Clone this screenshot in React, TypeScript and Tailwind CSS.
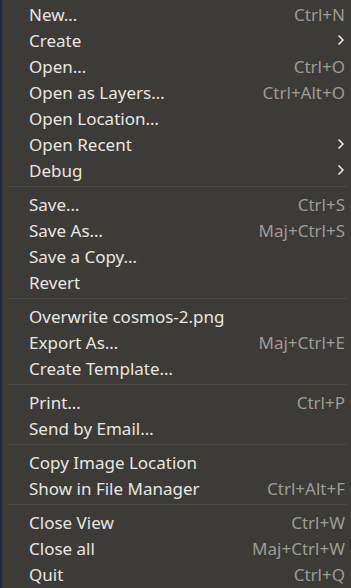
import React from "react";

type Item = { label: string; shortcut?: string; sub?: boolean };

const groups: Item[][] = [
  [
    { label: "New…", shortcut: "Ctrl+N" },
    { label: "Create", sub: true },
    { label: "Open…", shortcut: "Ctrl+O" },
    { label: "Open as Layers…", shortcut: "Ctrl+Alt+O" },
    { label: "Open Location…" },
    { label: "Open Recent", sub: true },
    { label: "Debug", sub: true },
  ],
  [
    { label: "Save…", shortcut: "Ctrl+S" },
    { label: "Save As…", shortcut: "Maj+Ctrl+S" },
    { label: "Save a Copy…" },
    { label: "Revert" },
  ],
  [
    { label: "Overwrite cosmos-2.png" },
    { label: "Export As…", shortcut: "Maj+Ctrl+E" },
    { label: "Create Template…" },
  ],
  [
    { label: "Print…", shortcut: "Ctrl+P" },
    { label: "Send by Email…" },
  ],
  [
    { label: "Copy Image Location" },
    { label: "Show in File Manager", shortcut: "Ctrl+Alt+F" },
  ],
  [
    { label: "Close View", shortcut: "Ctrl+W" },
    { label: "Close all", shortcut: "Maj+Ctrl+W" },
    { label: "Quit", shortcut: "Ctrl+Q" },
  ],
];

function Chevron() {
  return (
    <svg width="6" height="10" viewBox="0 0 6 10" className="mr-[1px]">
      <path d="M1 1 L5 5 L1 9" fill="none" stroke="#e6e4df" strokeWidth="1.7" strokeLinecap="round" strokeLinejoin="round" />
    </svg>
  );
}

export default function App() {
  return (
    <div
      className="w-[351px] h-[588px] bg-[#3c3b37] flex overflow-hidden"
      style={{ fontFamily: '"Noto Sans", "Open Sans", sans-serif' }}
    >
      <div className="w-[2px] bg-[#1b2a4a] shrink-0" />
      <div className="flex-1 flex flex-col pt-[1px]">
        {groups.map((g, gi) => (
          <React.Fragment key={gi}>
            {gi > 0 && <div className="h-px bg-[#4b4945] mt-[3px] mb-[4px] ml-[6px] mr-[4px]" />}
            {g.map((it) => (
              <div key={it.label} className="h-[26px] flex items-center pl-[27px] pr-[6px] text-[17px] leading-none">
                <span className="text-[#e8e6e1] flex-1">{it.label}</span>
                {it.shortcut && <span className="text-[#9d9b95]">{it.shortcut}</span>}
                {it.sub && <Chevron />}
              </div>
            ))}
          </React.Fragment>
        ))}
      </div>
    </div>
  );
}
